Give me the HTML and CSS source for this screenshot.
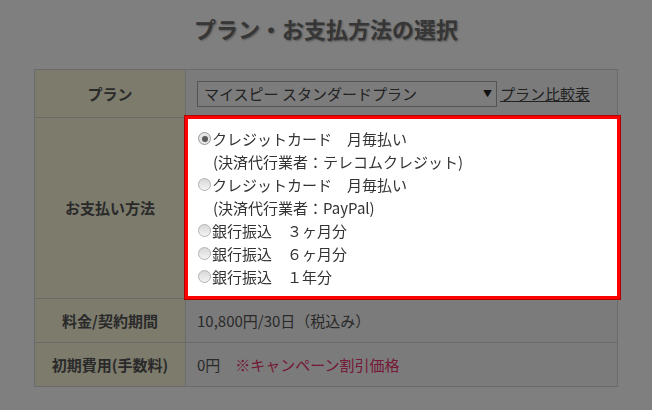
FILE: index.html
```html
<!DOCTYPE html>
<html lang="ja">
<head>
<meta charset="utf-8">
<title>プラン・お支払方法の選択</title>
<link rel="stylesheet" href="styles.css">
</head>
<body>
<div class="page">
  <h1 class="title">プラン・お支払方法の選択</h1>
  <table class="plan-table">
    <tr class="row-plan">
      <th class="label">プラン</th>
      <td class="value">
        <div class="plan-line">
          <div class="fake-select"><span class="sel-text">マイスピー スタンダードプラン</span><span class="sel-arrow">▼</span></div>
          <a class="compare-link" href="#">プラン比較表</a>
        </div>
      </td>
    </tr>
    <tr class="row-pay">
      <th class="label">お支払い方法</th>
      <td class="value pay-cell">
        <div class="highlight">
          <div class="opt"><span class="radio checked"></span>クレジットカード　月毎払い</div>
          <div class="opt sub">(決済代行業者：テレコムクレジット)</div>
          <div class="opt"><span class="radio"></span>クレジットカード　月毎払い</div>
          <div class="opt sub">(決済代行業者：PayPal)</div>
          <div class="opt"><span class="radio"></span>銀行振込　３ヶ月分</div>
          <div class="opt"><span class="radio"></span>銀行振込　６ヶ月分</div>
          <div class="opt"><span class="radio"></span>銀行振込　１年分</div>
        </div>
      </td>
    </tr>
    <tr class="row-fee">
      <th class="label">料金/契約期間</th>
      <td class="value">10,800円/30日（税込み）</td>
    </tr>
    <tr class="row-init">
      <th class="label">初期費用(手数料)</th>
      <td class="value">0円　<span class="campaign">※キャンペーン割引価格</span></td>
    </tr>
  </table>
</div>
<div class="overlay"></div>
</body>
</html>
```

FILE: styles.css
```css
html, body {
  margin: 0;
  padding: 0;
  background: #ffffff;
}
body {
  font-family: "Noto Sans CJK JP", "Noto Sans", sans-serif;
  color: #555555;
  width: 652px;
  height: 410px;
  overflow: hidden;
}
.page {
  padding-top: 14px;
}
.title {
  margin: 0 0 26px 0;
  text-align: center;
  font-size: 22px;
  line-height: 29px;
  font-weight: bold;
  color: #6c6c6c;
  text-shadow: 1px 1px 2px rgba(0, 0, 0, 0.35);
}
.plan-table {
  margin-left: 34px;
  width: 584px;
  border-collapse: collapse;
  table-layout: fixed;
}
.plan-table th,
.plan-table td {
  border: 1px solid #d4d4d4;
  font-size: 15px;
  line-height: 22px;
}
.label {
  width: 150px;
  background: #f9f7d9;
  font-weight: bold;
  text-align: center;
  color: #555555;
  padding: 0;
}
.value {
  background: #f7f7f7;
  padding: 0 0 0 11px;
  color: #555555;
  text-align: left;
}
.row-plan { height: 48px; }
.row-fee { height: 44px; }
.row-init { height: 44px; }
.plan-line {
  display: flex;
  align-items: center;
  gap: 3px;
}
.fake-select {
  height: 24px;
  border: 1px solid #a8a8a8;
  background: #f8f8f8;
  display: flex;
  align-items: center;
  justify-content: space-between;
  padding: 0 4px 0 6px;
  box-sizing: content-box;
  width: 288px;
  color: #444444;
}
.sel-text {
  font-size: 15px;
}
.sel-arrow {
  font-size: 9px;
  color: #222222;
}
.compare-link {
  color: #444444;
  text-decoration: underline;
  font-size: 15px;
}
.pay-cell {
  padding: 0;
  vertical-align: top;
}
.highlight {
  position: relative;
  z-index: 10;
  background: #ffffff;
  border: 3px solid #ff0000;
  box-shadow: 0 0 0 1px #b00000;
  margin: -2px -3px -1px -1px;
  padding: 8px 8px 8px 10px;
  color: #333333;
}
.opt {
  display: flex;
  align-items: center;
  height: 23px;
  font-size: 15px;
  line-height: 23px;
  white-space: nowrap;
}
.opt.sub {
  padding-left: 15px;
}
.radio {
  width: 11px;
  height: 11px;
  border-radius: 50%;
  border: 1px solid #b4b4b4;
  background: linear-gradient(#d8d8d8, #f4f4f4);
  margin-right: 1px;
  position: relative;
  flex: none;
}
.radio.checked {
  border-color: #9a9a9a;
  background: #e4e4e4;
}
.radio.checked::after {
  content: "";
  position: absolute;
  left: 2.5px;
  top: 2.5px;
  width: 6px;
  height: 6px;
  border-radius: 50%;
  background: #5a5a5a;
}
.campaign {
  color: #e8336e;
}
.overlay {
  position: fixed;
  inset: 0;
  background: rgba(0, 0, 0, 0.5);
  z-index: 5;
}
```
